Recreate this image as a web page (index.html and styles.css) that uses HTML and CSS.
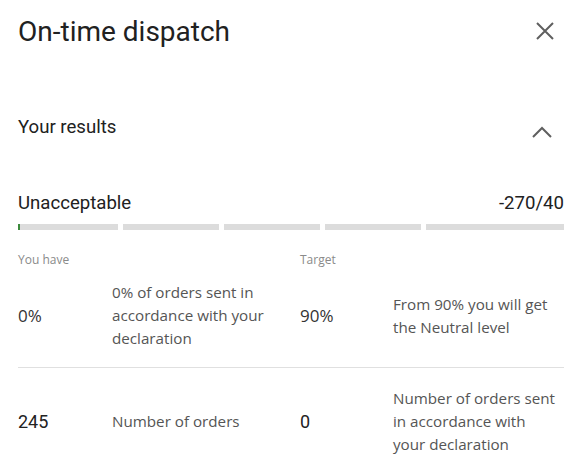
FILE: index.html
```html
<!DOCTYPE html>
<html lang="en">
<head>
    <meta charset="UTF-8">
    <meta name="viewport" content="width=device-width, initial-scale=1.0">
    <title>On-time dispatch</title>
    <link rel="stylesheet" href="styles.css">
</head>
<body>
    <div class="panel">
        <div class="panel-head">
            <h1>On-time dispatch</h1>
            <span class="close-btn">
                <svg width="18" height="18" viewBox="0 0 18 18"><path d="M1 1 L17 17 M17 1 L1 17" stroke="#5f5f5f" stroke-width="2" fill="none"/></svg>
            </span>
        </div>

        <div class="section-head">
            <h2>Your results</h2>
            <span class="toggle">
                <svg width="20" height="12" viewBox="0 0 20 12"><path d="M1 11 L10 2 L19 11" stroke="#5f5f5f" stroke-width="2" fill="none"/></svg>
            </span>
        </div>

        <div class="score">
            <span>Unacceptable</span>
            <span>-270/40</span>
        </div>
        <div class="bar">
            <div class="seg first"><div class="fill" style="width: 2px"></div></div>
            <div class="seg"></div>
            <div class="seg"></div>
            <div class="seg"></div>
            <div class="seg last"></div>
        </div>

        <!-- results table -->
        <div class="labels">
            <span>You have</span>
            <span></span>
            <span>Target</span>
            <span></span>
        </div>
        <div class="row">
            <div class="val">0%</div>
            <div class="desc">0% of orders sent in accordance with your declaration</div>
            <div class="val">90%</div>
            <div class="desc">From 90% you will get the Neutral level</div>
        </div>
        <div class="row row2">
            <div class="val num">245</div>
            <div class="desc">Number of orders</div>
            <div class="val num">0</div>
            <div class="desc">Number of orders sent in accordance with your declaration</div>
        </div>
    </div>
</body>
</html>
```
FILE: styles.css
```css
body {
    margin: 0;
    background-color: white;
    font-family: Roboto, "Liberation Sans", sans-serif;
    color: #222;
}

.panel {
    width: 546px;
    padding-left: 18px;
}

.panel-head {
    height: 62px;
    display: flex;
    align-items: center;
    justify-content: space-between;
}

.panel-head h1 {
    margin: 0;
    font-size: 28px;
    font-weight: 400;
    color: #212121;
}

.close-btn {
    display: flex;
    margin-right: 10px;
}

.section-head {
    margin-top: 48px;
    height: 40px;
    display: flex;
    align-items: center;
    justify-content: space-between;
}

.section-head h2 {
    margin: 0;
    font-size: 18.6px;
    font-weight: 400;
    color: #212121;
    position: relative;
    top: -3px;
}

.toggle {
    display: flex;
    margin-right: 12px;
    position: relative;
    top: 2px;
}

.score {
    margin-top: 42px;
    display: flex;
    justify-content: space-between;
    font-size: 18.6px;
    color: #212121;
    line-height: 22px;
}

.bar {
    margin-top: 10px;
    display: flex;
    gap: 5px;
}

.seg {
    width: 96px;
    height: 6px;
    background-color: #dcdcdc;
}

.seg.first {
    width: 100px;
}

.seg.last {
    flex: 1;
}

.fill {
    height: 100%;
    background-color: #3c8a3c;
}

.labels {
    margin-top: 22px;
    display: grid;
    grid-template-columns: 94px 188px 93px 1fr;
    font-family: "Open Sans", sans-serif;
    font-size: 12px;
    color: #8a8a8a;
    line-height: 16px;
}

.row {
    display: grid;
    grid-template-columns: 94px 188px 93px 1fr;
    align-items: center;
    padding: 13px 0 17px;
}

.row2 {
    border-top: 1px solid #e0e0e0;
    padding: 19px 0;
}

.val {
    font-family: "Open Sans", sans-serif;
    font-size: 17px;
    font-weight: 400;
    color: #333;
}

.val.num {
    font-family: Roboto, sans-serif;
    font-size: 18px;
    font-weight: 400;
    color: #222;
}

.desc {
    font-family: "Open Sans", sans-serif;
    font-size: 15.2px;
    line-height: 23px;
    color: #555;
    padding-right: 5px;
}
```
